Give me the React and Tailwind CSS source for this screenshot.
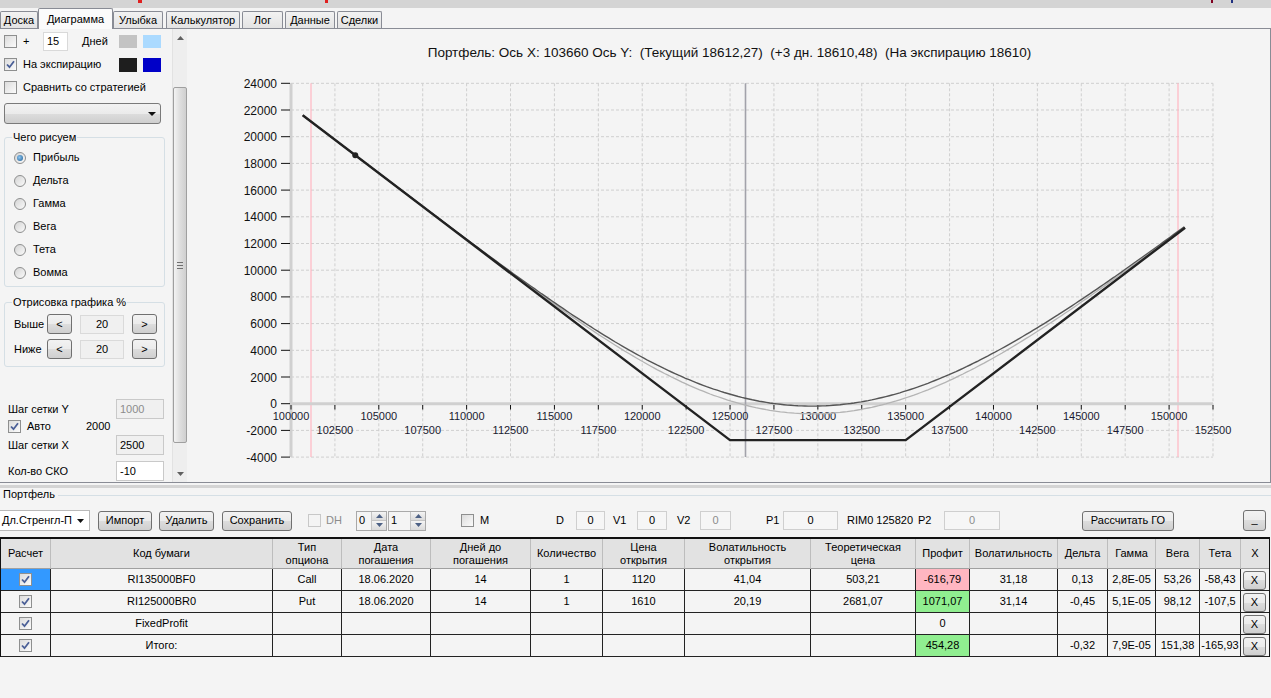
import React from "react";

const X0 = 291, XW = 922 / 21, Y0 = 403.7, YH = 26.7;
const px = (s) => X0 + ((s - 100000) / 2500) * XW;
const py = (v) => Y0 - (v / 2000) * YH;
function ncdf(x) {
  const t = 1 / (1 + 0.2316419 * Math.abs(x));
  const d = 0.3989423 * Math.exp((-x * x) / 2);
  const p = d * t * (0.3193815 + t * (-0.3565638 + t * (1.781478 + t * (-1.821256 + t * 1.330274))));
  return x > 0 ? 1 - p : p;
}
function bs(S, K, T, sig, call) {
  const st = sig * Math.sqrt(T);
  const d1 = (Math.log(S / K) + 0.5 * st * st) / st;
  const d2 = d1 - st;
  return call ? S * ncdf(d1) - K * ncdf(d2) : K * ncdf(-d2) - S * ncdf(-d1);
}
function curve(T, sig) {
  const pts = [];
  for (let s = 100666; s <= 150911; s += 200) {
    const v = bs(s, 125000, T, sig, false) + bs(s, 135000, T, sig, true) - 2730;
    pts.push(`${px(s).toFixed(1)},${py(v).toFixed(1)}`);
  }
  return pts.join(" ");
}
const CUR = curve(14 / 365, 0.312);
const P3 = curve(11 / 365, 0.312);
const EXP = [
  [100666, 21604],
  [125000, -2730],
  [135000, -2730],
  [150911, 13181],
]
  .map(([s, v]) => `${px(s).toFixed(1)},${py(v).toFixed(1)}`)
  .join(" ");

function Chart() {
  const xs = Array.from({ length: 22 }, (_, i) => i);
  const ys = Array.from({ length: 15 }, (_, j) => -4000 + j * 2000);
  const top = py(24000), bot = py(-4000), right = X0 + 21 * XW;
  return (
    <svg width="1083" height="453" viewBox="187 29 1083 453" className="block" fontFamily="Liberation Sans, Arial, sans-serif">
      <text x="729.5" y="57" textAnchor="middle" fontSize="13.5" fill="#111" className="whitespace-pre">
        {"Портфель: Ось X: 103660 Ось Y:  (Текущий 18612,27)  (+3 дн. 18610,48)  (На экспирацию 18610)"}
      </text>
      {xs.map((i) => (
        <line key={"gx" + i} x1={X0 + i * XW} x2={X0 + i * XW} y1={top} y2={bot} stroke="#cfcfcf" strokeDasharray="3 2" />
      ))}
      {ys.map((v) => (
        <line key={"gy" + v} x1={X0} x2={right} y1={py(v)} y2={py(v)} stroke="#cfcfcf" strokeDasharray="3 2" />
      ))}
      <line x1={311} x2={311} y1={top} y2={bot} stroke="#ffb6c1" strokeWidth="1.2" />
      <line x1={1178} x2={1178} y1={top} y2={bot} stroke="#ffb6c1" strokeWidth="1.2" />
      <line x1={X0} x2={X0} y1={top} y2={bot} stroke="#d0d0d0" strokeWidth="3" />
      <line x1={X0} x2={right} y1={Y0} y2={Y0} stroke="#d0d0d0" strokeWidth="3" />
      <line x1={745.5} x2={745.5} y1={top} y2={bot} stroke="#a2a2aa" strokeWidth="1.6" />
      {ys.map((v) => (
        <g key={"ty" + v}>
          <line x1={281} x2={290} y1={py(v)} y2={py(v)} stroke="#111" />
          <text x={277} y={py(v) + 4.5} textAnchor="end" fontSize="12" fill="#111">
            {v}
          </text>
        </g>
      ))}
      {xs.map((i) => (
        <g key={"tx" + i}>
          <line x1={X0 + i * XW} x2={X0 + i * XW} y1={405} y2={409.5} stroke="#111" />
          <text x={X0 + i * XW} y={i % 2 === 0 ? 420 : 434} textAnchor="middle" fontSize="11" fill="#1a1a30">
            {100000 + i * 2500}
          </text>
        </g>
      ))}
      <polyline points={P3} fill="none" stroke="#b4b4b4" strokeWidth="1.3" />
      <polyline points={CUR} fill="none" stroke="#555" strokeWidth="1.4" />
      <polyline points={EXP} fill="none" stroke="#222" strokeWidth="2.4" strokeLinejoin="round" />
      <circle cx={px(103660)} cy={py(18610)} r="3" fill="#222" />
    </svg>
  );
}

const Check = ({ checked, cls = "" }) => (
  <div className={`w-[13px] h-[13px] shrink-0 border border-[#8e8f8f] bg-[linear-gradient(135deg,#dcdcdc,#fbfbfb)] flex items-center justify-center ${cls}`}>
    {checked && (
      <svg width="9" height="9" viewBox="0 0 9 9">
        <path d="M1 4.5 L3.5 7.2 L8 1.2" fill="none" stroke="#4a5f97" strokeWidth="1.8" />
      </svg>
    )}
  </div>
);

const Radio = ({ on }) => (
  <div className="w-[12px] h-[12px] shrink-0 rounded-full border border-[#8e8f8f] bg-[linear-gradient(135deg,#d4d4d4,#fafafa)] flex items-center justify-center">
    {on && <div className="w-[6px] h-[6px] rounded-full bg-[radial-gradient(circle_at_40%_40%,#8cc6f2,#1d5c92)]" />}
  </div>
);

const btnBg = "bg-[linear-gradient(#f2f2f2,#ebebeb_50%,#dddddd_50%,#cfcfcf)]";

function Tab({ label, sel, cls }) {
  return sel ? (
    <div className={`relative z-10 -mb-px h-[21px] border border-b-0 border-[#898c95] bg-[#fbfbfb] flex items-center justify-center rounded-t-[2px] ${cls}`}>{label}</div>
  ) : (
    <div className={`h-[17px] border border-b-0 border-[#898c95] bg-[linear-gradient(#f2f2f2,#e3e3e3)] flex items-center justify-center rounded-t-[2px] ${cls}`}>{label}</div>
  );
}

function LeftPanel() {
  return (
    <div className="w-[172px] shrink-0 flex flex-col">
      <div className="mt-[2px] h-[20px] flex items-center">
        <Check cls="ml-[4px]" />
        <span className="ml-[6px] w-[20px]">+</span>
        <div className="w-[25px] h-[19px] bg-white border border-[#d9d9d9] flex items-center pl-[3px]">15</div>
        <span className="ml-[14px] w-[37px]">Дней</span>
        <div className="w-[18px] h-[13px] bg-[#c3c3c3]" />
        <div className="ml-[6px] w-[18px] h-[13px] bg-[#abdaff]" />
      </div>
      <div className="mt-[2px] h-[23px] flex items-center">
        <Check checked cls="ml-[4px]" />
        <span className="ml-[6px] w-[96px]">На экспирацию</span>
        <div className="w-[18px] h-[14px] bg-[#1e1e1e]" />
        <div className="ml-[6px] w-[18px] h-[14px] bg-[#0000c8]" />
      </div>
      <div className="h-[23px] flex items-center">
        <Check cls="ml-[4px]" />
        <span className="ml-[6px]">Сравнить со стратегией</span>
      </div>
      <div className={`mt-[4px] ml-[4px] w-[157px] h-[21px] rounded-[3px] border border-[#7a7a7a] ${btnBg} flex items-center justify-end pr-[4px]`}>
        <svg width="8" height="4" viewBox="0 0 8 4">
          <path d="M0 0 H8 L4 4Z" fill="#111" />
        </svg>
      </div>
      <div className="relative mt-[13px] ml-[4px] w-[161px] border border-[#d5dfe5] rounded-[3px] pt-[8px] pb-[2px]">
        <span className="absolute left-[7px] -top-[8px] px-[1px] bg-[#f4f4f4] leading-[14px]">Чего рисуем</span>
        {["Прибыль", "Дельта", "Гамма", "Вега", "Тета", "Вомма"].map((t, i) => (
          <div key={t} className="h-[23px] flex items-center pl-[9px]">
            <Radio on={i === 0} />
            <span className="ml-[7px]">{t}</span>
          </div>
        ))}
      </div>
      <div className="relative mt-[15px] ml-[4px] w-[161px] border border-[#d5dfe5] rounded-[3px] pt-[11px] pb-[7px]">
        <span className="absolute left-[7px] -top-[8px] px-[1px] bg-[#f4f4f4] leading-[14px]">Отрисовка графика %</span>
        {["Выше", "Ниже"].map((t, i) => (
          <div key={t} className={`h-[20px] flex items-center pl-[9px] ${i ? "mt-[5px]" : ""}`}>
            <span className="w-[33px]">{t}</span>
            <div className={`w-[25px] h-[20px] rounded-[3px] border border-[#707070] ${btnBg} flex items-center justify-center`}>&lt;</div>
            <div className="ml-[8px] w-[44px] h-[19px] bg-[#f0f0f0] border border-[#dadada] flex items-center justify-center">20</div>
            <div className={`ml-[8px] w-[25px] h-[20px] rounded-[3px] border border-[#707070] ${btnBg} flex items-center justify-center`}>&gt;</div>
          </div>
        ))}
      </div>
      <div className="mt-[32px] h-[20px] flex items-center">
        <span className="pl-[8px] w-[116px]">Шаг сетки Y</span>
        <div className="w-[48px] h-[20px] bg-[#f0f0f0] border border-[#c9c9c9] flex items-center pl-[3px] text-[#8c8c8c]">1000</div>
      </div>
      <div className="h-[14px] flex items-center">
        <Check checked cls="ml-[8px]" />
        <span className="ml-[6px] w-[59px]">Авто</span>
        <span>2000</span>
      </div>
      <div className="mt-[2px] h-[20px] flex items-center">
        <span className="pl-[8px] w-[116px]">Шаг сетки X</span>
        <div className="w-[48px] h-[20px] bg-[#f0f0f0] border border-[#c9c9c9] flex items-center pl-[3px]">2500</div>
      </div>
      <div className="mt-[6px] h-[20px] flex items-center">
        <span className="pl-[8px] w-[116px]">Кол-во СКО</span>
        <div className="w-[48px] h-[20px] bg-white border border-[#c9c9c9] flex items-center pl-[3px]">-10</div>
      </div>
    </div>
  );
}

function Scrollbar() {
  return (
    <div className="w-[15px] shrink-0 flex flex-col bg-[#eeeeee] border-l border-[#e2e2e2]">
      <div className="h-[17px] flex items-center justify-center">
        <svg width="7" height="4" viewBox="0 0 7 4">
          <path d="M0 4 L3.5 0 L7 4Z" fill="#606060" />
        </svg>
      </div>
      <div className="flex-1 flex flex-col">
        <div className="mt-[41px] h-[356px] border border-[#9f9f9f] rounded-[2px] bg-[linear-gradient(90deg,#f3f3f3,#dedede_50%,#cfcfcf)] flex flex-col items-center justify-center gap-[2px]">
          <div className="w-[6px] h-px bg-[#707070]" />
          <div className="w-[6px] h-px bg-[#707070]" />
          <div className="w-[6px] h-px bg-[#707070]" />
        </div>
      </div>
      <div className="h-[17px] flex items-center justify-center">
        <svg width="7" height="4" viewBox="0 0 7 4">
          <path d="M0 0 H7 L3.5 4Z" fill="#606060" />
        </svg>
      </div>
    </div>
  );
}

const Btn = ({ cls, children }) => (
  <div className={`h-[20px] rounded-[3px] border border-[#707070] ${btnBg} flex items-center justify-center ${cls}`}>{children}</div>
);

const Box = ({ cls, children, gray }) => (
  <div className={`h-[19px] border border-[#cfcfcf] bg-[#f6f6f6] flex items-center justify-center ${gray ? "text-[#8c8c8c]" : ""} ${cls}`}>{children}</div>
);

const Spin = ({ cls, val }) => (
  <div className={`h-[20px] border border-[#a9a9a9] bg-[#f4f4f4] flex ${cls}`}>
    <span className="flex-1 pl-[2px] flex items-center">{val}</span>
    <div className="w-[15px] flex flex-col border-l border-[#c4c4c4]">
      <div className="flex-1 flex items-center justify-center bg-[linear-gradient(#f4f4f4,#dadada)] border-b border-[#c4c4c4]">
        <svg width="7" height="4" viewBox="0 0 7 4">
          <path d="M0 4 L3.5 0 L7 4Z" fill="#4d6185" />
        </svg>
      </div>
      <div className="flex-1 flex items-center justify-center bg-[linear-gradient(#f4f4f4,#dadada)]">
        <svg width="7" height="4" viewBox="0 0 7 4">
          <path d="M0 0 H7 L3.5 4Z" fill="#4d6185" />
        </svg>
      </div>
    </div>
  </div>
);

function Toolbar() {
  return (
    <div className="mt-[10px] h-[21px] flex items-center">
      <div className="w-[90px] h-[21px] bg-white border border-[#b9b9b9] border-l-0 flex items-center pl-[2px]">
        <span className="flex-1">Дл.Стренгл-П</span>
        <svg width="7" height="4" viewBox="0 0 7 4" className="mr-[5px]">
          <path d="M0 0 H7 L3.5 4Z" fill="#111" />
        </svg>
      </div>
      <Btn cls="ml-[8px] w-[54px]">Импорт</Btn>
      <Btn cls="ml-[7px] w-[55px]">Удалить</Btn>
      <Btn cls="ml-[8px] w-[70px]">Сохранить</Btn>
      <div className="ml-[16px] w-[13px] h-[13px] border border-[#c8c8c8] bg-[#f4f4f4]" />
      <span className="ml-[5px] w-[30px] text-[#8c8c8c]">DH</span>
      <Spin cls="w-[31px]" val="0" />
      <Spin cls="ml-[1px] w-[38px]" val="1" />
      <Check cls="ml-[35px]" />
      <span className="ml-[6px] w-[76px]">M</span>
      <span className="w-[20px]">D</span>
      <Box cls="w-[29px]">0</Box>
      <span className="ml-[8px] w-[24px]">V1</span>
      <Box cls="w-[30px]">0</Box>
      <span className="ml-[10px] w-[23px]">V2</span>
      <Box cls="w-[31px]" gray>0</Box>
      <span className="ml-[35px] w-[17px]">P1</span>
      <Box cls="w-[55px]">0</Box>
      <span className="ml-[9px] w-[71px]">RIM0 125820</span>
      <span className="w-[26px]">P2</span>
      <Box cls="w-[56px]" gray>0</Box>
      <Btn cls="ml-[82px] w-[92px]">Рассчитать ГО</Btn>
      <Btn cls="ml-[69px] w-[23px] h-[21px] items-end pb-[3px]">_</Btn>
    </div>
  );
}

const COLS = "grid grid-cols-[50px_222px_69px_89px_100px_72px_82px_126px_105px_54px_88px_50px_48px_44px_41px_28px]";
const HEAD = ["Расчет", "Код бумаги", "Тип\nопциона", "Дата\nпогашения", "Дней до\nпогашения", "Количество", "Цена\nоткрытия", "Волатильность\nоткрытия", "Теоретическая\nцена", "Профит", "Волатильность", "Дельта", "Гамма", "Вега", "Тета", "X"];
const ROWS = [
  ["RI135000BF0", "Call", "18.06.2020", "14", "1", "1120", "41,04", "503,21", "-616,79", "31,18", "0,13", "2,8E-05", "53,26", "-58,43"],
  ["RI125000BR0", "Put", "18.06.2020", "14", "1", "1610", "20,19", "2681,07", "1071,07", "31,14", "-0,45", "5,1E-05", "98,12", "-107,5"],
  ["FixedProfit", "", "", "", "", "", "", "", "0", "", "", "", "", ""],
  ["Итого:", "", "", "", "", "", "", "", "454,28", "", "-0,32", "7,9E-05", "151,38", "-165,93"],
];
const PROFIT_BG = ["bg-[#ffb6c1]", "bg-[#90ee90]", "", "bg-[#90ee90]"];

function Table() {
  return (
    <div className="mt-[6px] w-[1270px] border-t-2 border-l border-r border-[#111]">
      <div className={COLS}>
        {HEAD.map((h, i) => (
          <div key={i} className={`h-[30px] bg-[#e2e2e2] border-b border-[#a0a0a0] ${i < 15 ? "border-r border-r-[#bdbdbd]" : ""} flex items-center justify-center text-center leading-[13px] whitespace-pre`}>
            {h}
          </div>
        ))}
      </div>
      {ROWS.map((r, ri) => (
        <div key={ri} className={COLS}>
          <div className={`h-[22px] border-r border-b border-[#222] flex items-center justify-center ${ri === 0 ? "bg-[#3399ff]" : "bg-[#f4f4f4]"}`}>
            <Check checked />
          </div>
          {r.map((c, ci) => (
            <div key={ci} className={`h-[22px] border-r border-b border-[#222] flex items-center justify-center ${ci === 8 ? PROFIT_BG[ri] || "bg-[#f4f4f4]" : "bg-[#f4f4f4]"}`}>
              {c}
            </div>
          ))}
          <div className="h-[22px] border-b border-[#222] bg-[#f4f4f4] flex items-start pl-[2px] pt-[2px]">
            <div className={`w-[23px] h-[19px] rounded-[3px] border border-[#707070] ${btnBg} flex items-center justify-center`}>X</div>
          </div>
        </div>
      ))}
    </div>
  );
}

export default function App() {
  return (
    <div className="w-[1271px] h-[698px] overflow-hidden bg-[#f4f4f4] text-[11px] text-black font-['Liberation_Sans',Arial,sans-serif] flex flex-col">
      <div className="h-[8px] shrink-0 bg-[#d4d4d4] flex">
        <div className="ml-[138px] w-[4px] h-[3px] bg-[#e02020]" />
        <div className="ml-[183px] w-[3px] h-[3px] bg-[#e02020]" />
        <div className="ml-[883px] w-[2px] h-[3px] bg-[#800020]" />
        <div className="ml-[18px] w-[2px] h-[3px] bg-[#203080]" />
      </div>
      <div className="h-[21px] shrink-0 flex items-end border-b border-[#898c95]">
        <Tab label="Доска" cls="w-[38px]" />
        <Tab label="Диаграмма" sel cls="w-[75px]" />
        <Tab label="Улыбка" cls="w-[50px]" />
        <Tab label="Калькулятор" cls="ml-[3px] w-[74px]" />
        <Tab label="Лог" cls="ml-[2px] w-[41px]" />
        <Tab label="Данные" cls="ml-[2px] w-[50px]" />
        <Tab label="Сделки" cls="ml-[2px] w-[45px]" />
      </div>
      <div className="h-[454px] shrink-0 flex border-b border-r border-[#898c95] bg-[#f4f4f4]">
        <LeftPanel />
        <Scrollbar />
        <Chart />
      </div>
      <div className="h-[2px] shrink-0" />
      <div className="h-[3px] shrink-0 bg-[#d4d4d4]" />
      <div className="h-[12px] shrink-0 flex items-center">
        <span className="pl-[3px] leading-[12px]">Портфель</span>
        <div className="ml-[3px] flex-1 h-px bg-[#d5dfe5] mt-[2px]" />
      </div>
      <Toolbar />
      <Table />
    </div>
  );
}
